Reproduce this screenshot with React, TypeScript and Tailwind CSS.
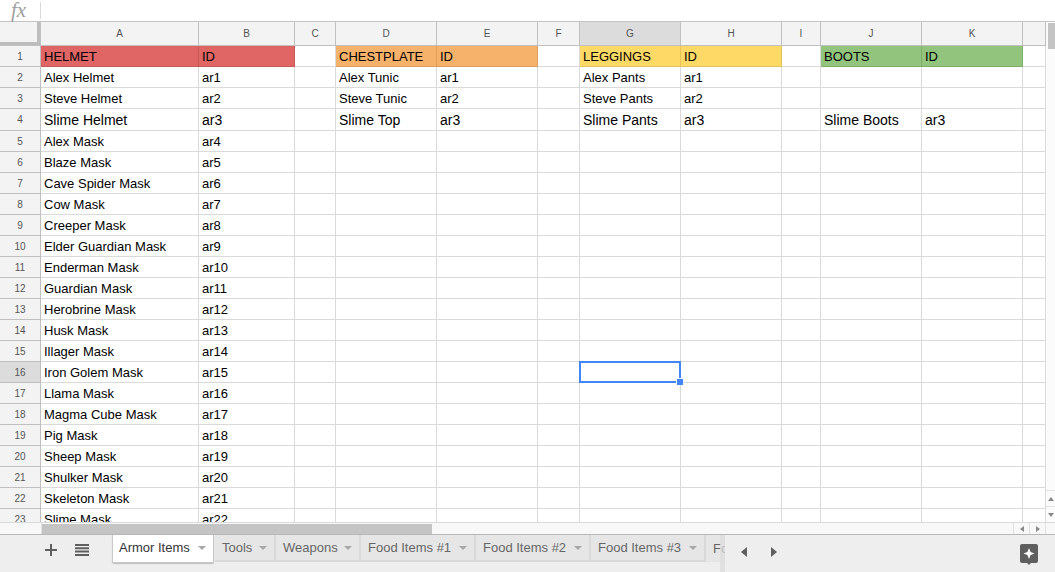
import { Fragment } from "react";

const COLUMNS = ["A", "B", "C", "D", "E", "F", "G", "H", "I", "J", "K", ""];

const MASKS = [
  "Alex Mask", "Blaze Mask", "Cave Spider Mask", "Cow Mask", "Creeper Mask", "Elder Guardian Mask",
  "Enderman Mask", "Guardian Mask", "Herobrine Mask", "Husk Mask", "Illager Mask", "Iron Golem Mask",
  "Llama Mask", "Magma Cube Mask", "Pig Mask", "Sheep Mask", "Shulker Mask", "Skeleton Mask", "Slime Mask",
];

type Row = Record<number, string>;

const ROWS: Row[] = [
  { 0: "HELMET", 1: "ID", 3: "CHESTPLATE", 4: "ID", 6: "LEGGINGS", 7: "ID", 9: "BOOTS", 10: "ID" },
  { 0: "Alex Helmet", 1: "ar1", 3: "Alex Tunic", 4: "ar1", 6: "Alex Pants", 7: "ar1" },
  { 0: "Steve Helmet", 1: "ar2", 3: "Steve Tunic", 4: "ar2", 6: "Steve Pants", 7: "ar2" },
  { 0: "Slime Helmet", 1: "ar3", 3: "Slime Top", 4: "ar3", 6: "Slime Pants", 7: "ar3", 9: "Slime Boots", 10: "ar3" },
  ...MASKS.map((name, i) => ({ 0: name, 1: `ar${i + 4}` })),
];

const HEADER_FILL: Record<number, string> = {
  0: "bg-[#e06666] border-[#c55a5a]",
  1: "bg-[#e06666] border-[#c55a5a]",
  3: "bg-[#f6b26b] border-[#dc9f60]",
  4: "bg-[#f6b26b] border-[#dc9f60]",
  6: "bg-[#ffd966] border-[#e5c35b]",
  7: "bg-[#ffd966] border-[#e5c35b]",
  9: "bg-[#93c47d] border-[#7fae6b]",
  10: "bg-[#93c47d] border-[#7fae6b]",
};

const TABS = [
  { label: "Tools", w: "w-[61px]" },
  { label: "Weapons", w: "w-[85px]" },
  { label: "Food Items #1", w: "w-[115px]" },
  { label: "Food Items #2", w: "w-[115px]" },
  { label: "Food Items #3", w: "w-[115px]" },
];

function Caret() {
  return <span className="mr-[7px] ml-auto h-0 w-0 border-x-4 border-t-4 border-x-transparent border-t-[#a8a8a8]" />;
}

function rowHeight(i: number) {
  if (i === 3) return "h-[22px]";
  return "h-[21px]";
}

function textSize(i: number) {
  if (i === 3) return "text-[14px]";
  return "text-[13px]";
}

export default function App() {
  return (
    <div className="flex h-[572px] w-[1055px] flex-col overflow-hidden bg-white font-['Liberation_Sans',Arial,sans-serif] text-black">
      <div className="flex h-[22px] shrink-0 items-center border-b border-[#c4c4c4]">
        <span className="w-[40px] pr-[3px] text-center font-['Liberation_Serif',serif] text-[21px] italic leading-none text-[#a0a0a0]">
          fx
        </span>
        <span className="h-[17px] w-px bg-[#dadada]" />
      </div>

      <div className="flex min-h-0 flex-1">
        <div className="min-w-0 flex-1 overflow-hidden">
          <div className="grid grid-cols-[41px_158px_96px_41px_101px_101px_42px_101px_101px_39px_101px_101px_23px]">
            <div className="relative h-[24px] border-r border-b border-[#c0c0c0] bg-[#f3f3f3]">
              <span className="absolute top-0 right-0 bottom-0 w-[3px] bg-[#bdbdbd]" />
              <span className="absolute right-0 bottom-0 left-0 h-[3px] bg-[#bdbdbd]" />
            </div>
            {COLUMNS.map((col, c) => (
              <div
                key={c}
                className={`flex h-[24px] items-center justify-center border-r border-b border-[#c0c0c0] text-[10px] text-[#555] ${
                  c === 6 ? "bg-[#dcdcdc]" : "bg-[#f3f3f3]"
                }`}
              >
                {col}
              </div>
            ))}

            {ROWS.map((row, r) => (
              <Fragment key={r}>
                <div
                  className={`flex items-center justify-center border-r border-b border-[#c0c0c0] text-[10px] text-[#555] ${rowHeight(r)} ${
                    r === 15 ? "bg-[#dcdcdc]" : "bg-[#f3f3f3]"
                  }`}
                >
                  {r + 1}
                </div>
                {COLUMNS.map((_, c) => {
                  const fill = r === 0 ? HEADER_FILL[c] : undefined;
                  return (
                    <div
                      key={c}
                      className={`relative flex items-center overflow-visible border-r border-b pl-[3px] leading-none whitespace-nowrap ${rowHeight(r)} ${textSize(r)} ${
                        fill ?? "border-[#dadada]"
                      }`}
                    >
                      {row[c]}
                      {r === 15 && c === 6 && (
                        <span className="absolute -top-px -right-px -bottom-px -left-px z-10 border-2 border-[#4285f4]">
                          <span className="absolute -right-[4px] -bottom-[4px] h-[7px] w-[7px] border-t border-l border-white bg-[#4285f4]" />
                        </span>
                      )}
                    </div>
                  );
                })}
              </Fragment>
            ))}
          </div>
        </div>

        <div className="flex w-[9px] shrink-0 flex-col bg-[#fbfbfb]">
          <div className="mt-px ml-[2px] h-[26px] w-[7px] bg-[#c4c4c4]" />
          <div className="flex-1" />
          <div className="flex h-[16px] items-center justify-center border-t border-[#e2e2e2]">
            <span className="h-0 w-0 border-x-[3px] border-b-[4px] border-x-transparent border-b-[#888]" />
          </div>
          <div className="flex h-[16px] items-center justify-center border-t border-[#e2e2e2]">
            <span className="h-0 w-0 border-x-[3px] border-t-[4px] border-x-transparent border-t-[#888]" />
          </div>
        </div>
      </div>

      <div className="flex h-[12px] shrink-0 items-stretch border-t border-[#dadada] bg-[#f8f8f8]">
        <div className="w-[42px] border-r border-[#e2e2e2]" />
        <div className="mt-px h-[10px] w-[390px] bg-[#c4c4c4]" />
        <div className="flex-1" />
        <div className="flex w-[17px] items-center justify-center border-x border-[#e2e2e2]">
          <span className="h-0 w-0 border-y-[3px] border-r-[4px] border-y-transparent border-r-[#888]" />
        </div>
        <div className="flex w-[16px] items-center justify-center border-r border-[#e2e2e2]">
          <span className="h-0 w-0 border-y-[3px] border-l-[4px] border-y-transparent border-l-[#888]" />
        </div>
        <div className="w-[9px]" />
      </div>

      <div className="flex h-[38px] shrink-0 items-start border-t border-[#b8b8b8] bg-[#eeeeee] pr-[17px] text-[13px]">
        <div className="flex w-[112px] items-center pt-[9px] pl-[45px]">
          <svg width="12" height="12" viewBox="0 0 12 12" fill="#5f5f5f">
            <path d="M5 0h2v5h5v2H7v5H5V7H0V5h5z" />
          </svg>
          <svg className="ml-[18px]" width="14" height="12" viewBox="0 0 14 12" fill="#5f5f5f">
            <path d="M0 0h14v2H0zM0 3.300h14v2H0zM0 6.600h14v2H0zM0 10h14v2H0z" />
          </svg>
        </div>
        <div className="mr-px flex h-[28px] w-[102px] items-center rounded-b-[2px] border-x border-b border-[#c8c8c8] bg-white pb-[2px] pl-[6px] text-[#333] shadow-[0_1px_1px_rgba(0,0,0,0.2)]">
          Armor Items
          <Caret />
        </div>
        {TABS.map((tab) => (
          <div
            key={tab.label}
            className={`flex h-[27px] items-center border-r-2 border-b-2 border-[#d9d9d9] bg-[#e6e6e6] pl-[7px] text-[#666] ${tab.w}`}
          >
            {tab.label}
            <Caret />
          </div>
        ))}
        <div className="relative h-[37px] w-[19px] overflow-hidden">
          <div className="flex h-[27px] items-center bg-[#e6e6e6] pl-[7px] text-[#666]">Food</div>
          <span className="absolute top-0 right-0 bottom-0 w-[5px] bg-[#dcdcdc]/70" />
        </div>
        <div className="ml-[16px] flex items-center gap-[24px] pt-[12px]">
          <span className="h-0 w-0 border-y-[5px] border-r-[6px] border-y-transparent border-r-[#5f5f5f]" />
          <span className="h-0 w-0 border-y-[5px] border-l-[6px] border-y-transparent border-l-[#5f5f5f]" />
        </div>
        <div className="flex-1" />
        <svg className="mt-[9px]" width="18" height="21" viewBox="0 0 18 21">
          <path
            d="M2 0h14a2 2 0 0 1 2 2v15a2 2 0 0 1-2 2h-5l-2 2-2-2H2a2 2 0 0 1-2-2V2a2 2 0 0 1 2-2z"
            fill="#5f5f5f"
          />
          <path d="M9 4l1.600 3.900L14.500 9.500l-3.900 1.600L9 15l-1.600-3.900L3.500 9.500l3.900-1.600z" fill="#fff" />
        </svg>
      </div>
    </div>
  );
}
